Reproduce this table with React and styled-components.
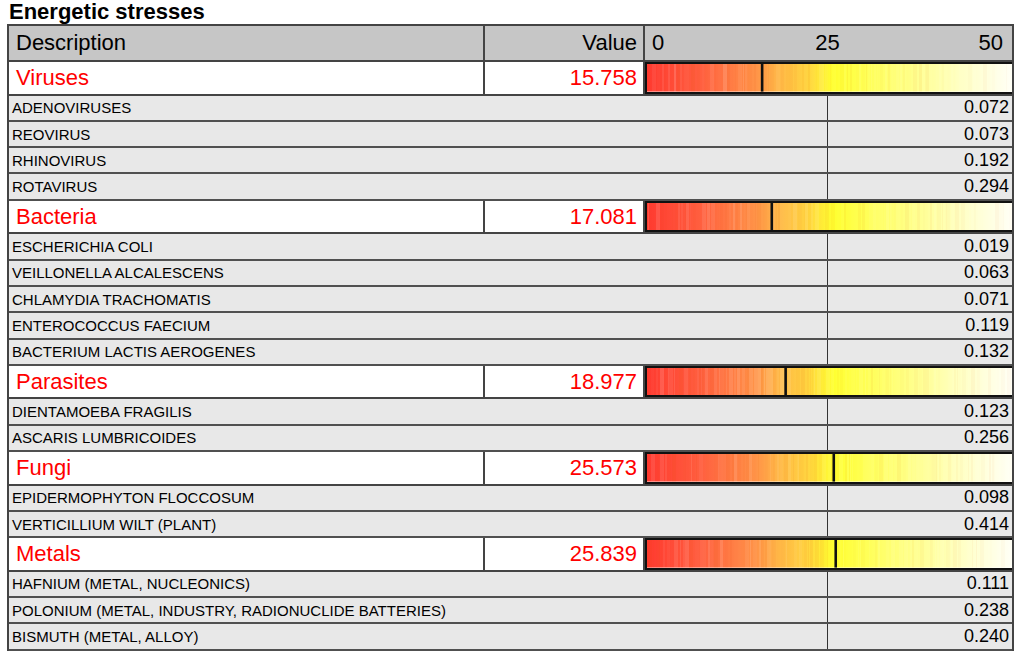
import React from 'react';
import styled, { createGlobalStyle } from 'styled-components';

const GlobalStyle = createGlobalStyle`
  html, body { margin: 0; padding: 0; background: #fff; }
  body { font-family: "Liberation Sans", Arial, Helvetica, sans-serif; color: #000; }
`;

const LINE = '#444';

const Page = styled.div`
  width: 1023px;
  padding-left: 7px;
  box-sizing: border-box;
`;

const Title = styled.h1`
  margin: 0;
  padding: 0 0 0 2px;
  height: 24px;
  box-sizing: border-box;
  font-size: 22px;
  line-height: 24px;
  font-weight: bold;
`;

const Table = styled.div`
  width: 1007px;
  border: 2px solid ${LINE};
  border-bottom: none;
  box-sizing: border-box;
  display: flex;
  flex-direction: column;
`;

const HeaderRow = styled.div`
  display: grid;
  grid-template-columns: 476px 160px 1fr;
  height: 36px;
  box-sizing: border-box;
  border-bottom: 2px solid ${LINE};
  background: #c6c6c6;
  font-size: 22px;
`;

const Cell = styled.div`
  display: flex;
  align-items: center;
  justify-content: ${(p) => (p.$right ? 'flex-end' : 'flex-start')};
  padding: ${(p) => (p.$right ? '0 6px 0 0' : '0 0 0 7px')};
  border-right: ${(p) => (p.$sep ? `2px solid ${LINE}` : 'none')};
  box-sizing: border-box;
  white-space: nowrap;
  min-width: 0;
`;

const Scale = styled.div`
  display: grid;
  grid-template-columns: 1fr auto 1fr;
  align-items: center;
  padding: 0 9px 0 7px;
  span:nth-child(2) { justify-self: center; }
  span:nth-child(3) { justify-self: end; }
`;

const CategoryRow = styled.div`
  display: grid;
  grid-template-columns: 476px 160px 1fr;
  height: 33.6px;
  box-sizing: border-box;
  border-bottom: 2px solid ${LINE};
  background: #fff;
  color: #ff0000;
  font-size: 22px;
`;

const SubRow = styled.div`
  display: grid;
  grid-template-columns: 819px 1fr;
  height: 26.3px;
  box-sizing: border-box;
  border-bottom: 2px solid #505050;
  background: #e8e8e8;
`;

const SubLabel = styled.div`
  display: flex;
  align-items: center;
  padding-left: 3px;
  font-size: 15px;
  border-right: 1px solid #333;
  white-space: nowrap;
`;

const SubValue = styled.div`
  display: flex;
  align-items: center;
  justify-content: flex-end;
  padding-right: 3px;
  font-size: 18px;
`;

const BarFrame = styled.div`
  height: 100%;
  border: 2px solid #111;
  border-right: none;
  box-sizing: border-box;
  overflow: hidden;
  svg { display: block; width: 100%; height: 100%; }
`;

function rng(seed) {
  let s = seed;
  return () => {
    s = (s * 9301 + 49297) % 233280;
    return s / 233280;
  };
}

const W = 365;
const H = 28;

function Bar({ value, seed }) {
  const r = rng(seed);
  const stripes = [];
  let x = 0;
  while (x < W) {
    const w = 1 + Math.floor(r() * 4);
    const light = r() < 0.5;
    const fade = 1 - (x / W) * 0.6;
    const o = r() * (light ? 0.16 : 0.1) * fade;
    stripes.push(
      <rect key={x} x={x} y={0} width={w} height={H} fill={light ? '#ffffff' : '#e05000'} opacity={o} />
    );
    x += w + Math.floor(r() * 3);
  }
  const mx = (value / 50) * W;
  const gid = `g${seed}`;
  return (
    <BarFrame>
      <svg viewBox={`0 0 ${W} ${H}`} preserveAspectRatio="none">
        <defs>
          <linearGradient id={gid} x1="0" y1="0" x2="1" y2="0">
            <stop offset="0" stopColor="#ff3a30" />
            <stop offset="0.15" stopColor="#ff6040" />
            <stop offset="0.3" stopColor="#ff9448" />
            <stop offset="0.36" stopColor="#ffb848" />
            <stop offset="0.44" stopColor="#ffd440" />
            <stop offset="0.51" stopColor="#ffff30" />
            <stop offset="0.7" stopColor="#ffff80" />
            <stop offset="0.86" stopColor="#ffffc4" />
            <stop offset="1" stopColor="#fffff6" />
          </linearGradient>
        </defs>
        <rect x="0" y="0" width={W} height={H} fill={`url(#${gid})`} />
        {stripes}
        <rect x={mx - 1.2} y="0" width="2.6" height={H} fill="#111" />
      </svg>
    </BarFrame>
  );
}

const data = [
  {
    name: 'Viruses', value: '15.758', items: [
      ['ADENOVIRUSES', '0.072'], ['REOVIRUS', '0.073'], ['RHINOVIRUS', '0.192'], ['ROTAVIRUS', '0.294'],
    ],
  },
  {
    name: 'Bacteria', value: '17.081', items: [
      ['ESCHERICHIA COLI', '0.019'], ['VEILLONELLA ALCALESCENS', '0.063'], ['CHLAMYDIA TRACHOMATIS', '0.071'],
      ['ENTEROCOCCUS FAECIUM', '0.119'], ['BACTERIUM LACTIS AEROGENES', '0.132'],
    ],
  },
  {
    name: 'Parasites', value: '18.977', items: [
      ['DIENTAMOEBA FRAGILIS', '0.123'], ['ASCARIS LUMBRICOIDES', '0.256'],
    ],
  },
  {
    name: 'Fungi', value: '25.573', items: [
      ['EPIDERMOPHYTON FLOCCOSUM', '0.098'], ['VERTICILLIUM WILT (PLANT)', '0.414'],
    ],
  },
  {
    name: 'Metals', value: '25.839', items: [
      ['HAFNIUM (METAL, NUCLEONICS)', '0.111'],
      ['POLONIUM (METAL, INDUSTRY, RADIONUCLIDE BATTERIES)', '0.238'],
      ['BISMUTH (METAL, ALLOY)', '0.240'],
    ],
  },
];

export default function App() {
  return (
    <Page>
      <GlobalStyle />
      <Title>Energetic stresses</Title>
      <Table>
        <HeaderRow>
          <Cell $sep>Description</Cell>
          <Cell $sep $right>Value</Cell>
          <Scale><span>0</span><span>25</span><span>50</span></Scale>
        </HeaderRow>
        {data.map((cat, i) => (
          <React.Fragment key={cat.name}>
            <CategoryRow>
              <Cell $sep>{cat.name}</Cell>
              <Cell $sep $right>{cat.value}</Cell>
              <Bar value={parseFloat(cat.value)} seed={17 + i * 31} />
            </CategoryRow>
            {cat.items.map(([label, v]) => (
              <SubRow key={label}>
                <SubLabel>{label}</SubLabel>
                <SubValue>{v}</SubValue>
              </SubRow>
            ))}
          </React.Fragment>
        ))}
      </Table>
    </Page>
  );
}
